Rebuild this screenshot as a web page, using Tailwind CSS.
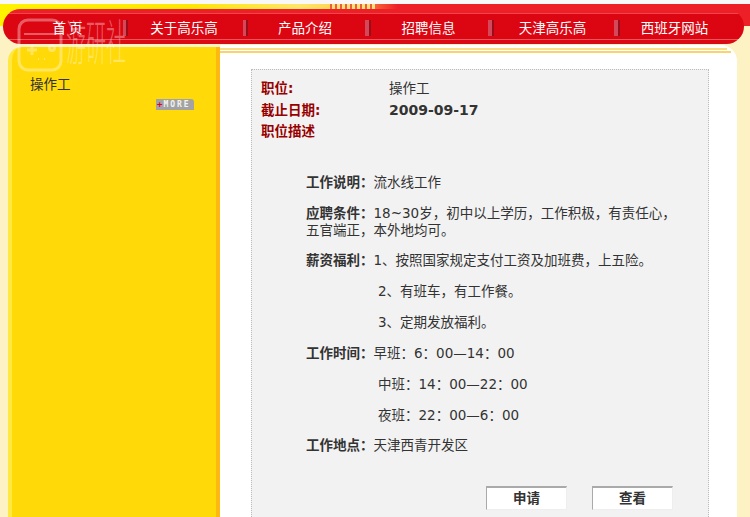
<html lang="zh">
<head>
    <meta charset="UTF-8">
    <title>招聘信息</title>
    <script src="https://cdn.jsdelivr.net/npm/@tailwindcss/browser@4"></script>
</head>
<body class="relative w-[750px] h-[517px] overflow-hidden bg-[#fdf2c4] font-['DejaVu_Sans','Noto_Sans_CJK_SC',sans-serif] text-[13.5px] text-[#333]">
    <!-- top strip -->
    <div class="h-[4px] bg-[#f8f8f8]"></div>
    <header class="relative h-[41px] pt-[5px] pl-[3px] pr-[6px] bg-no-repeat bg-[length:100%_22px] bg-[linear-gradient(90deg,#fff200_0%,#ffe600_25%,#ffe56b_40%,#ffd34d_45%,#ee2027_53%,#ee2027_100%)]">
        <div class="absolute left-[330px] top-0 w-[45px] h-[5px] bg-[repeating-linear-gradient(90deg,#e8603a_0,#e8603a_2px,#ffe07a_2px,#ffe07a_5px)]"></div>
        <nav class="flex items-center h-[35px] pt-[2px] rounded-[18px] text-white font-['Noto_Sans_CJK_SC',sans-serif] text-[13.5px] bg-[linear-gradient(180deg,#ee2027_4px,#f0454c_4px,#f0454c_5px,#dc0612_5px,#dc0612_30px,#f0555c_30px,#f0555c_31px,#d90a14_31px)]">
            <a class="w-[120px] pl-[9px] text-center">首 页</a>
            <span class="w-[5px] h-[16px] bg-[#d4485a] border-r-2 border-[#9a0c18]"></span>
            <a class="w-[115px] pr-[3px] text-center">关于高乐高</a>
            <span class="w-[5px] h-[16px] bg-[#d4485a] border-r-2 border-[#9a0c18]"></span>
            <a class="w-[117px] pr-[3px] text-center">产品介绍</a>
            <span class="w-[6px] h-[16px] bg-[#d4485a] border-r-2 border-[#9a0c18]"></span>
            <a class="w-[117px] pr-[2px] text-center">招聘信息</a>
            <span class="w-[6px] h-[16px] bg-[#d4485a] border-r-2 border-[#9a0c18]"></span>
            <a class="w-[120px] pr-[3px] text-center">天津高乐高</a>
            <span class="w-[6px] h-[16px] bg-[#d4485a] border-r-2 border-[#9a0c18]"></span>
            <a class="w-[124px] pr-[15px] text-center">西班牙网站</a>
        </nav>
    </header>

    <main class="flex h-[472px] pl-[8px] pr-[13px]">
        <!-- left yellow column -->
        <aside class="w-[212px] h-full mt-[2px] shrink-0 bg-[#ffd908] border-l-[4px] border-l-[#ffe840] border-r-[4px] border-r-[#fdb812] rounded-tl-[14px] pt-[26px] pl-[18px] pr-[22px]">
            <p class="text-[#333] font-['Noto_Sans_CJK_SC',sans-serif] text-[13.5px] leading-[20px]">操作工</p>
            <div class="flex justify-end mt-[6px]">
                <span class="flex items-center w-[38px] h-[11px] rounded-tr-[3px] bg-[#a3a3a3] text-[#f2f2f2] font-['DejaVu_Sans_Mono',monospace] text-[8px] tracking-[2px] font-bold leading-none"><span class="text-[#e4002b] text-[9px] tracking-normal mx-[1px]">+</span>MORE</span>
            </div>
        </aside>

        <!-- white content -->
        <section class="flex-1 bg-white rounded-tr-[16px] pl-[31px] pr-[28px]">
            <div class="-ml-[31px] -mr-[18px] mt-[3px] h-[2px] bg-[#fbdc86]"></div>
            <div class="-ml-[31px] -mr-[22px] mt-[1px] h-[2px] bg-[#fbd36b]"></div>
            <div class="h-[460px] mt-[16px] bg-[#f2f2f2] border border-dotted border-[#bbb] pt-[8px] pl-[9px] leading-[21.5px]">
                <div class="flex"><span class="w-[128px] text-[#980000] font-bold">职位:</span><span>操作工</span></div>
                <div class="flex"><span class="w-[128px] text-[#980000] font-bold">截止日期:</span><span class="font-bold text-[14px]">2009-09-17</span></div>
                <div class="text-[#980000] font-bold">职位描述</div>

                <div class="pl-[45px] pr-[28px] mt-[31px] leading-[17px]">
                    <p class="mb-[14px]"><b>工作说明：</b>流水线工作</p>
                    <p class="mb-[13px]"><b>应聘条件：</b>18~30岁，初中以上学历，工作积极，有责任心，五官端正，本外地均可。</p>
                    <p class="mb-[14px]"><b>薪资福利：</b>1、按照国家规定支付工资及加班费，上五险。</p>
                    <p class="mb-[14px] pl-[72px]">2、有班车，有工作餐。</p>
                    <p class="mb-[14px] pl-[72px]">3、定期发放福利。</p>
                    <p class="mb-[14px]"><b>工作时间：</b>早班：6：00—14：00</p>
                    <p class="mb-[14px] pl-[72px]">中班：14：00—22：00</p>
                    <p class="mb-[13px] pl-[72px]">夜班：22：00—6：00</p>
                    <p><b>工作地点：</b>天津西青开发区</p>
                </div>

                <div class="flex justify-end gap-[25px] pr-[35px] mt-[32px]">
                    <button class="w-[81px] h-[24px] bg-white border-t-2 border-l border-r border-b border-t-[#aaa] border-l-[#aaa] border-r-[#eee] border-b-[#eee] font-bold">申请</button>
                    <button class="w-[81px] h-[24px] bg-white border-t-2 border-l border-r border-b border-t-[#aaa] border-l-[#aaa] border-r-[#eee] border-b-[#eee] font-bold">查看</button>
                </div>
            </div>
        </section>
    </main>

    <!-- watermark -->
    <div class="absolute left-[17px] top-[18px] flex items-start text-white/35 font-['Noto_Sans_CJK_SC',sans-serif]">
        <svg width="46" height="54" viewBox="0 0 46 54" fill="none" stroke="currentColor" stroke-width="3">
            <rect x="2" y="2" width="42" height="50" rx="9"/>
            <path d="M7 16h37" stroke-width="2"/>
            <path d="M10 32h10M15 27v10"/>
            <circle cx="35" cy="30" r="2.5"/>
            <path d="M21 41h1M27 41h1" stroke-width="2"/>
        </svg>
        <span class="inline-block ml-[3px] -mt-[1px] text-[20px] leading-[20px] font-light origin-top scale-y-[2.4]">游研社</span>
    </div>
</body>
</html>
